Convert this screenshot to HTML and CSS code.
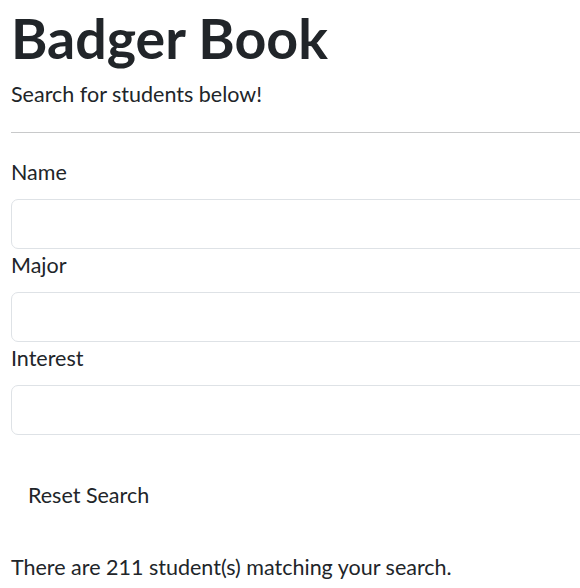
FILE: index.html
```html
<!DOCTYPE html>
<html lang="en">
<head>
<meta charset="utf-8">
<title>Badger Book</title>
<link rel="stylesheet" href="styles.css">
</head>
<body>
<div class="page">
  <h1 class="title">Badger Book</h1>
  <p class="subtitle">Search for students below!</p>
  <hr class="divider">
  <form class="search-form">
    <label class="field-label" for="name">Name</label>
    <input class="field-input" id="name" type="text">
    <label class="field-label" for="major">Major</label>
    <input class="field-input" id="major" type="text">
    <label class="field-label" for="interest">Interest</label>
    <input class="field-input" id="interest" type="text">
    <button class="reset-btn" type="button">Reset Search</button>
  </form>
  <p class="result-count">There are 211 student(s) matching your search.</p>
</div>
</body>
</html>
```
FILE: styles.css
```css
html, body {
  overflow: hidden;
}
body {
  margin: 0;
  background: #fff;
  color: #212529;
  font-family: Lato, "Open Sans", sans-serif;
  font-size: 21.5px;
  line-height: 32px;
}
.page {
  width: 640px;
  padding: 4px 0 0 11px;
}
.title {
  margin: 0 0 7px;
  font-size: 55.5px;
  line-height: 67px;
  font-weight: 700;
}
.subtitle {
  margin: 0;
}
.divider {
  margin: 22px 0 23px;
  border: 0;
  border-top: 1px solid #c8c9ca;
  height: 0;
}
.search-form {
  display: flex;
  flex-direction: column;
  align-items: flex-start;
}
.field-label {
  margin-bottom: 11px;
}
.field-input {
  box-sizing: border-box;
  width: 100%;
  height: 50px;
  margin: 0;
  border: 1px solid #dee2e6;
  border-radius: 7px;
  background: #fff;
  font: inherit;
}
.reset-btn {
  margin-top: 35px;
  padding: 8px 16px;
  border: 1px solid transparent;
  border-radius: 7px;
  background: transparent;
  color: #212529;
  font: inherit;
  line-height: 32px;
}
.result-count {
  margin: 31px 0 0;
}
```
